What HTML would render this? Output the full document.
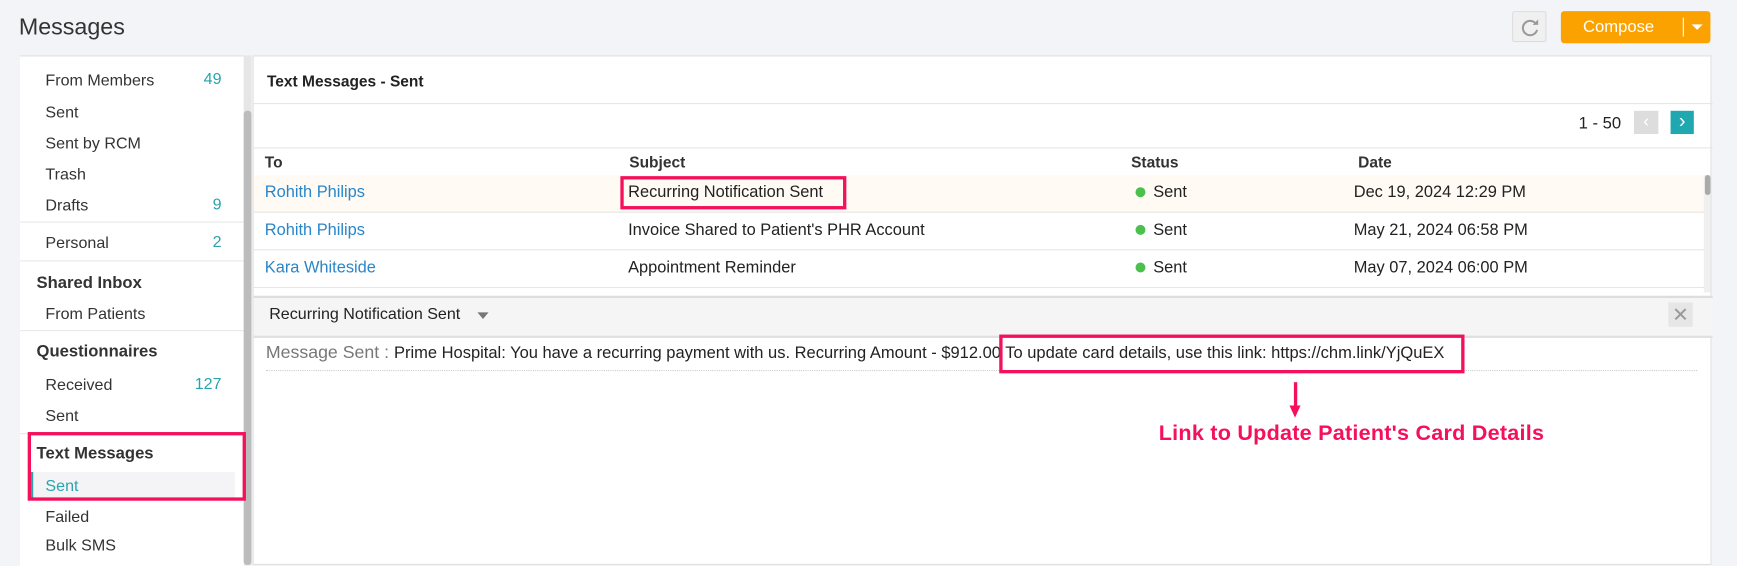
<!DOCTYPE html>
<html><head><meta charset="utf-8"><style>
html,body{margin:0;padding:0;width:1737px;height:553px;overflow:hidden;background:#f3f4f8;font-family:"Liberation Sans",sans-serif;}
#w{position:absolute;left:0;top:0;width:1568px;height:499px;transform:scale(1.1078);transform-origin:0 0;}
.a{position:absolute;white-space:nowrap;}
.it{position:absolute;left:23px;font-size:14.5px;color:#333;line-height:16px;}
.ct{position:absolute;right:20px;font-size:14.5px;color:#2aa3ad;}
.hd{position:absolute;left:33px;font-size:15px;font-weight:bold;color:#333;}
.dv{position:absolute;left:0;width:202px;height:1px;background:#e8e8e8;}
.rd{position:absolute;border:3px solid #f4105a;box-sizing:border-box;}
.th{position:absolute;top:137px;font-size:14px;font-weight:bold;color:#333;}
.row{position:absolute;left:0;width:1310px;height:33px;border-bottom:1px solid #e6e6e6;font-size:14.8px;color:#222;}
.row span{position:absolute;top:8px;}
.dot{display:inline-block;width:9px;height:9px;border-radius:50%;background:#4cc04c;margin-right:7px;}
</style></head><body><div id="w">
<div class="a" style="left:17px;top:13px;font-size:21px;color:#333;">Messages</div>
<div class="a" style="left:1365px;top:10px;width:31px;height:28px;background:#f0f0f0;border:1px solid #ddd;border-radius:2px;box-sizing:border-box;">
<svg width="31" height="28" viewBox="0 0 31 28"><path d="M20.5 10.5A6.5 6.5 0 1 0 21.5 16" fill="none" stroke="#999" stroke-width="1.8"/><path d="M22.5 6.5v5h-5z" fill="#999"/></svg></div>
<div class="a" style="left:1409px;top:10px;width:135px;height:29px;background:#fba100;border-radius:3px;">
<span class="a" style="left:20px;top:6px;color:#fff;font-size:15px;">Compose</span>
<span class="a" style="left:110px;top:6px;width:1px;height:17px;background:#fff;"></span>
<span class="a" style="left:118px;top:12px;border-left:5px solid transparent;border-right:5px solid transparent;border-top:5px solid #fff;"></span></div>

<div class="a" style="left:18px;top:50px;width:202px;height:460px;background:#fff;border-top:1px solid #e0e0e0;">
<div class="it" style="top:14px">From Members</div><div class="ct" style="top:13px">49</div>
<div class="it" style="top:43px">Sent</div>
<div class="it" style="top:71px">Sent by RCM</div>
<div class="it" style="top:99px">Trash</div>
<div class="it" style="top:127px">Drafts</div><div class="ct" style="top:126px">9</div>
<div class="dv" style="top:149px"></div>
<div class="it" style="top:161px">Personal</div><div class="ct" style="top:160px">2</div>
<div class="dv" style="top:184px"></div>
<div class="hd" style="top:196px;left:15px">Shared Inbox</div>
<div class="it" style="top:225px">From Patients</div>
<div class="dv" style="top:247px"></div>
<div class="hd" style="top:258px;left:15px">Questionnaires</div>
<div class="it" style="top:289px">Received</div><div class="ct" style="top:288px">127</div>
<div class="it" style="top:317px">Sent</div>
<div class="dv" style="top:340px"></div>
<div class="hd" style="top:350px;left:15px">Text Messages</div>
<div class="a" style="left:10px;top:375px;width:182px;height:24px;background:#f4f4f6;border-left:2px solid #2aa3ad;"></div>
<div class="it" style="top:380px;color:#2aa3ad">Sent</div>
<div class="it" style="top:408px">Failed</div>
<div class="it" style="top:434px">Bulk SMS</div>
</div>
<div class="a" style="left:220px;top:50px;width:7px;height:460px;background:#e6e6e6;"></div>
<div class="a" style="left:220px;top:100px;width:7px;height:410px;background:#bcbcbc;border-radius:3px;"></div>
<div class="rd" style="left:25px;top:390px;width:197px;height:62px;"></div>

<div class="a" style="left:228px;top:50px;width:1317px;height:460px;background:#fff;border:1px solid #e0e0e0;box-sizing:border-box;">
<div class="a" style="left:12px;top:14px;font-size:14px;font-weight:bold;color:#222;">Text Messages - Sent</div>
<div class="a" style="left:0;top:42px;width:1317px;height:1px;background:#e6e6e6;"></div>
<div class="a" style="left:1196px;top:52px;font-size:15px;color:#222;">1 - 50</div>
<div class="a" style="left:1246px;top:49px;width:22px;height:21px;background:#ddd;color:#fff;font-size:16px;text-align:center;line-height:20px;">‹</div>
<div class="a" style="left:1279px;top:49px;width:21px;height:21px;background:#20a8b0;color:#fff;font-size:18px;text-align:center;line-height:19px;">›</div>
<div class="a" style="left:0;top:82px;width:1317px;height:1px;background:#e6e6e6;"></div>
<div class="th" style="left:10px;top:87px">To</div><div class="th" style="left:339px;top:87px">Subject</div><div class="th" style="left:792px;top:87px">Status</div><div class="th" style="left:997px;top:87px">Date</div>
<div class="row" style="top:107px;background:#fffaf4"><span style="left:10px;color:#2a86c8">Rohith Philips</span><span style="left:338px">Recurring Notification Sent</span><span style="left:796px"><i class="dot"></i>Sent</span><span style="left:993px">Dec 19, 2024 12:29 PM</span></div>
<div class="row" style="top:141px"><span style="left:10px;color:#2a86c8">Rohith Philips</span><span style="left:338px">Invoice Shared to Patient's PHR Account</span><span style="left:796px"><i class="dot"></i>Sent</span><span style="left:993px">May 21, 2024 06:58 PM</span></div>
<div class="row" style="top:175px"><span style="left:10px;color:#2a86c8">Kara Whiteside</span><span style="left:338px">Appointment Reminder</span><span style="left:796px"><i class="dot"></i>Sent</span><span style="left:993px">May 07, 2024 06:00 PM</span></div>
<div class="a" style="left:1309px;top:107px;width:6px;height:106px;background:#f0f0f0;"></div>
<div class="a" style="left:1310px;top:107px;width:5px;height:18px;background:#aaa;border-radius:3px;"></div>
<div class="a" style="left:0;top:216px;width:1317px;height:34px;background:#f5f5f5;border-top:2px solid #ddd;border-bottom:2px solid #e0e0e0;"></div>
<div class="a" style="left:14px;top:225px;font-size:14.5px;color:#222;">Recurring Notification Sent</div>
<div class="a" style="left:202px;top:231px;border-left:5px solid transparent;border-right:5px solid transparent;border-top:6px solid #777;"></div>
<div class="a" style="left:1277px;top:222px;width:22px;height:22px;background:#e6e6e6;color:#999;font-size:18px;text-align:center;line-height:22px;">✕</div>
<div class="a" style="left:11px;top:259px;font-size:16px;color:#777;">Message Sent : <span style="font-size:14.9px;color:#222">Prime Hospital: You have a recurring payment with us. Recurring Amount - $912.00 To update card details, use this link: https://chm.link/YjQuEX</span></div>
<div class="a" style="left:11px;top:283px;width:1292px;border-top:1px dotted #ccc;"></div>
</div>
<div class="rd" style="left:902px;top:302px;width:420px;height:35px;"></div>
<div class="rd" style="left:560px;top:159px;width:204px;height:30px;"></div>
<div class="a" style="left:1168px;top:345px;width:3px;height:24px;background:#f4105a;"></div>
<div class="a" style="left:1164px;top:366px;border-left:5.5px solid transparent;border-right:5.5px solid transparent;border-top:11px solid #f4105a;"></div>
<div class="a" style="left:1046px;top:380px;font-size:19.5px;font-weight:bold;color:#f4105a;letter-spacing:0.2px;">Link to Update Patient's Card Details</div>
</div></body></html>
